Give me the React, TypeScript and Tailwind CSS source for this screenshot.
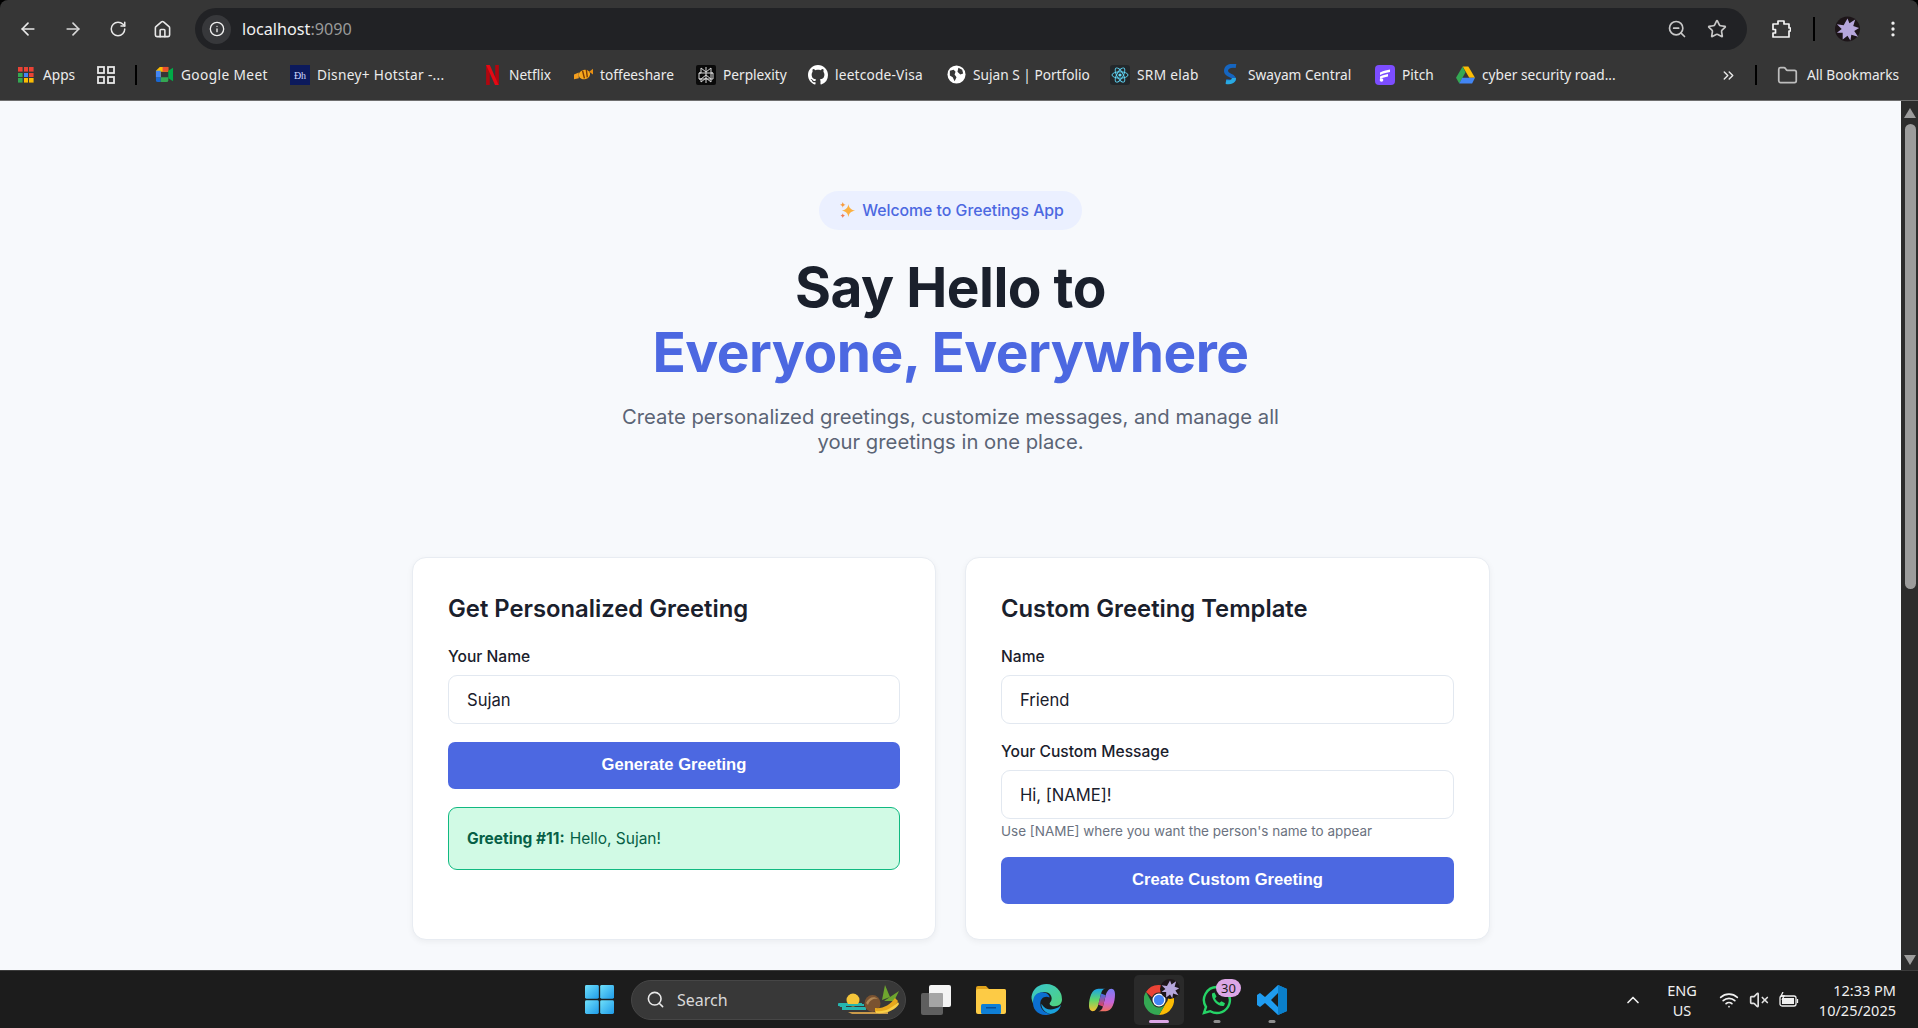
import type { ReactNode } from "react";
import clsx from "clsx";
import {
  ArrowLeft,
  ArrowRight,
  ChevronsRight,
  ChevronUp,
  EllipsisVertical,
  Folder,
  Home,
  Info,
  RotateCw,
  Search,
  Star,
  VolumeX,
  Wifi,
  ZoomOut,
} from "lucide-react";

const UI_FONT = "font-['Noto_Sans','Open_Sans',sans-serif]";

/* ---------- small drawings ---------- */

function AppsDots() {
  const colors = ["#ea4335", "#ea4335", "#ea4335", "#34a853", "#4285f4", "#ea4335", "#34a853", "#fbbc04", "#fbbc04"];
  return (
    <div className="grid grid-cols-3 gap-[1px] w-[16px] h-[16px]">
      {colors.map((c, i) => (
        <svg key={i} viewBox="0 0 4 4" className="w-[4.6px] h-[4.6px]">
          <rect width="4" height="4" fill={c} />
        </svg>
      ))}
    </div>
  );
}

function GridIcon() {
  return (
    <svg viewBox="0 0 18 18" className="w-[18px] h-[18px]" fill="none" stroke="#e8e8e8" strokeWidth="1.8">
      <rect x="1" y="1" width="6" height="6" />
      <rect x="11" y="1" width="6" height="6" />
      <rect x="1" y="11" width="6" height="6" />
      <rect x="11" y="11" width="6" height="6" />
    </svg>
  );
}

function MeetIcon() {
  return (
    <svg viewBox="0 0 20 20" className="w-[19px] h-[19px]">
      <path d="M5 2h9v5H6v6H1V6z" fill="#fbbc04" />
      <path d="M1 6h5v7H1z" fill="#4285f4" />
      <path d="M1 13h5v5H3a2 2 0 0 1-2-2z" fill="#1967d2" />
      <path d="M6 13h8v3a2 2 0 0 1-2 2H6z" fill="#34a853" />
      <path d="M14 2v5H8V2z" fill="#ea4335" opacity="0.9" />
      <path d="M14 6v8l5 3V3z" fill="#00ac47" />
    </svg>
  );
}

function DisneyIcon() {
  return (
    <svg viewBox="0 0 20 20" className="w-[20px] h-[20px]">
      <rect width="20" height="20" fill="#0c1a5c" />
      <text x="10" y="14" textAnchor="middle" fontSize="10" fill="#cfd8ff" fontFamily="Liberation Serif, serif">
        Ðh
      </text>
    </svg>
  );
}

function NetflixIcon() {
  return (
    <svg viewBox="0 0 14 22" className="w-[13px] h-[20px]">
      <path d="M0 0h4v22l-4 .5z" fill="#b1060f" />
      <path d="M10 0h4v22.5l-4-.5z" fill="#b1060f" />
      <path d="M0 0h4l10 22.5h-4z" fill="#e50914" />
    </svg>
  );
}

function ToffeeIcon() {
  return (
    <svg viewBox="0 0 20 20" className="w-[19px] h-[19px]">
      <path d="M0 10l5-2v6l-5 1z" fill="#f29d1f" />
      <ellipse cx="11" cy="10" rx="6" ry="5" transform="rotate(-15 11 10)" fill="#f5a81c" />
      <path d="M9 6l2 8M13 5l1 8" stroke="#7a3b06" strokeWidth="1.5" />
      <path d="M16 7l4-3v6z" fill="#e88f12" />
    </svg>
  );
}

function PerplexityIcon() {
  return (
    <svg viewBox="0 0 20 20" className="w-[20px] h-[20px] rounded-[2px]">
      <rect width="20" height="20" fill="#0a0a0a" />
      <path
        d="M5 3l5 4 5-4v5h2M5 3v5H3v6h2l5-4 5 4v-6M10 2v16M5 14v3l5-4 5 4v-3M3 8h14v6H3"
        fill="none"
        stroke="#d8d8d8"
        strokeWidth="1"
      />
    </svg>
  );
}

function GithubIcon() {
  return (
    <svg viewBox="0 0 16 16" className="w-[20px] h-[20px]" fill="#ffffff">
      <path d="M8 0C3.58 0 0 3.58 0 8c0 3.54 2.29 6.53 5.47 7.59.4.07.55-.17.55-.38 0-.19-.01-.82-.01-1.49-2.01.37-2.53-.49-2.69-.94-.09-.23-.48-.94-.82-1.13-.28-.15-.68-.52-.01-.53.63-.01 1.08.58 1.23.82.72 1.21 1.87.87 2.33.66.07-.52.28-.87.51-1.07-1.78-.2-3.64-.89-3.64-3.95 0-.87.31-1.59.82-2.15-.08-.2-.36-1.02.08-2.12 0 0 .67-.21 2.2.82.64-.18 1.32-.27 2-.27s1.36.09 2 .27c1.53-1.04 2.2-.82 2.2-.82.44 1.1.16 1.92.08 2.12.51.56.82 1.27.82 2.15 0 3.07-1.87 3.75-3.65 3.95.29.25.54.73.54 1.48 0 1.07-.01 1.93-.01 2.2 0 .21.15.46.55.38A8.01 8.01 0 0 0 16 8c0-4.42-3.58-8-8-8z" />
    </svg>
  );
}

function GlobeIcon() {
  return (
    <svg viewBox="0 0 20 20" className="w-[19px] h-[19px]">
      <circle cx="10" cy="10" r="9.5" fill="#ffffff" />
      <path d="M3 6l4-1 2 2-1 3 2 3-2 4-2-4-3-2zM12 3l4 2 1 4-3 1-3-3z" fill="#383838" />
    </svg>
  );
}

function ReactIcon() {
  return (
    <svg viewBox="0 0 20 20" className="w-[20px] h-[20px] rounded-[3px]">
      <rect width="20" height="20" fill="#23272a" />
      <g fill="none" stroke="#61dafb" strokeWidth="0.9">
        <ellipse cx="10" cy="10" rx="8" ry="3.2" />
        <ellipse cx="10" cy="10" rx="8" ry="3.2" transform="rotate(60 10 10)" />
        <ellipse cx="10" cy="10" rx="8" ry="3.2" transform="rotate(120 10 10)" />
      </g>
      <circle cx="10" cy="10" r="1.6" fill="#61dafb" />
    </svg>
  );
}

function SwayamIcon() {
  return (
    <svg viewBox="0 0 14 22" className="w-[14px] h-[22px]">
      <path d="M12 2C6 1 2 3 2 7c0 5 8 4 8 8 0 2-3 3-8 2" fill="none" stroke="#1565c0" strokeWidth="4" />
      <path d="M10 14c0 3-3 5-8 4" fill="none" stroke="#29a9e1" strokeWidth="4" />
    </svg>
  );
}

function PitchIcon() {
  return (
    <svg viewBox="0 0 20 20" className="w-[20px] h-[20px]">
      <rect width="20" height="20" rx="4" fill="#7c4dff" />
      <path d="M5 7.5c4-2 7-2.500 10-3v2.500c-3 .5-6 1-10 3zM5 11.500c3-1.500 5-2 8-2.500v2.500c-3 .5-5 1-8 2.500z" fill="#ffffff" />
      <circle cx="6.500" cy="15" r="1.800" fill="#ffffff" />
    </svg>
  );
}

function DriveIcon() {
  return (
    <svg viewBox="0 0 20 18" className="w-[19px] h-[18px]">
      <path d="M7 0h6l7 12h-6z" fill="#fbbc04" />
      <path d="M7 0l3 6-6.500 12L0 12z" fill="#34a853" />
      <path d="M6.500 12H20l-3 6H3.500z" fill="#4285f4" />
    </svg>
  );
}

function Avatar({ className }: { className: string }) {
  return (
    <svg viewBox="0 0 26 26" className={className}>
      <circle cx="13" cy="13" r="13" fill="#1d1519" />
      <path
        d="M13 2l2 5 6-4-2 7 6 2-5 3 4 6-7-2-1 6-3-5-5 4 0-7-6 0 5-4-5-5 7 1z"
        fill="#b6a6dc"
      />
    </svg>
  );
}

function Sparkles() {
  return (
    <svg viewBox="0 0 18 18" className="w-[17px] h-[17px] shrink-0">
      <path d="M10 2c.7 4.200 2.200 5.800 7 7-4.800 1.200-6.300 2.800-7 7-.7-4.200-2.200-5.800-7-7 4.800-1.200 6.300-2.800 7-7z" fill="#fbb040" />
      <path d="M4 0c.4 1.800 1.100 2.500 3 3-1.900.5-2.600 1.200-3 3-.4-1.800-1.100-2.500-3-3 1.900-.5 2.600-1.200 3-3z" fill="#f79a3e" />
      <path d="M4 12c.3 1.500.9 2.100 2.400 2.500-1.500.4-2.100 1-2.400 2.500-.3-1.500-.9-2.100-2.400-2.500 1.500-.4 2.100-1 2.400-2.500z" fill="#ef7c55" />
    </svg>
  );
}

function WindowsLogo() {
  return (
    <svg viewBox="0 0 30 30" className="w-[29px] h-[29px]">
      <defs>
        <linearGradient id="winA" x1="0" y1="0" x2="1" y2="1">
          <stop offset="0" stopColor="#6fe0fb" />
          <stop offset="1" stopColor="#1f9be8" />
        </linearGradient>
      </defs>
      <rect x="0" y="0" width="14.300" height="14.300" rx="1.500" fill="url(#winA)" />
      <rect x="15.700" y="0" width="14.300" height="14.300" rx="1.500" fill="url(#winA)" />
      <rect x="0" y="15.700" width="14.300" height="14.300" rx="1.500" fill="url(#winA)" />
      <rect x="15.700" y="15.700" width="14.300" height="14.300" rx="1.500" fill="url(#winA)" />
    </svg>
  );
}

function SearchDecor() {
  return (
    <svg viewBox="0 0 62 32" className="w-[62px] h-[32px]">
      <path d="M0 19h24v2H8v2h20v3H4v-3H2z" fill="#25b5b0" />
      <path d="M10 28h40v2H14z" fill="#c99a4a" />
      <circle cx="15" cy="16" r="6.500" fill="#f4c53a" />
      <path d="M0 20h26v2H0z" fill="#25b5b0" />
      <path d="M44 16L47 1l5 12zM46 17l15-10-5 10z" fill="#6ea52e" />
      <ellipse cx="34.500" cy="19.500" rx="8" ry="8.500" fill="#7a5230" />
      <path d="M28 19c3-6 8-7 12-4-3-1-8 0-10 6z" fill="#b08654" />
      <path d="M37 24c8 1 15-3 20-10l3 3c-4 8-12 12-23 11z" fill="#e8a81c" />
      <path d="M38 27c8 1 15-2 22-9l1 2c-4 6-12 10-23 9z" fill="#f9cf45" />
    </svg>
  );
}

function TaskView() {
  return (
    <svg viewBox="0 0 30 30" className="w-[30px] h-[30px]">
      <rect x="0" y="8" width="22" height="22" rx="2" fill="#5f5f5f" />
      <rect x="8" y="0" width="22" height="22" rx="2" fill="#f4f4f4" />
      <rect x="8" y="8" width="14" height="14" rx="1" fill="#a5a5a5" />
    </svg>
  );
}

function ExplorerIcon() {
  return (
    <svg viewBox="0 0 30 30" className="w-[30px] h-[30px]">
      <path d="M0 3a2 2 0 0 1 2-2h8l3 3h15a2 2 0 0 1 2 2v4H0z" fill="#e0a21b" />
      <rect x="0" y="4" width="30" height="25" rx="2" fill="#fdcb45" />
      <rect x="5" y="19" width="20" height="10" rx="1.500" fill="#0f7fd6" />
      <rect x="10" y="22" width="10" height="1.500" fill="#0a4e94" />
    </svg>
  );
}

function EdgeIcon() {
  return (
    <svg viewBox="0 0 30 30" className="w-[31px] h-[31px]">
      <defs>
        <linearGradient id="edgeA" x1="0" y1="0" x2="1" y2="1">
          <stop offset="0" stopColor="#37c6d0" />
          <stop offset="1" stopColor="#52d37a" />
        </linearGradient>
      </defs>
      <path d="M15 0a15 15 0 0 1 15 15c0 4-3 6.500-7 6.500-3 0-5-1-5-2.500 0-1 2-2 2-5C20 10 16 7 11 8 6 9 3 13 2 19 .500 15 0 13 1 10 3 4 8 0 15 0z" fill="url(#edgeA)" />
      <path d="M2 16C3 10 7 8 11 8c4 0 7 3 7 5-5-2-9 1-9 6 0 5 4 9 10 10-2 .700-3 1-5 1C6 30 1 24 2 16z" fill="#0c6fd0" />
      <path d="M19 29c-5-1-9-5-9-10 3 5 8 7 13 5 3-1 5-2 6-4-1 5-5 8-10 9z" fill="#1aa1dc" />
    </svg>
  );
}

function CopilotIcon() {
  return (
    <svg viewBox="0 0 28 28" className="w-[28px] h-[26px]">
      <defs>
        <linearGradient id="copA" x1="0" y1="0" x2="0" y2="1">
          <stop offset="0" stopColor="#1ba4e8" />
          <stop offset="0.5" stopColor="#5fd66a" />
          <stop offset="1" stopColor="#f7c02f" />
        </linearGradient>
        <linearGradient id="copB" x1="0" y1="0" x2="0" y2="1">
          <stop offset="0" stopColor="#7b7cf5" />
          <stop offset="0.6" stopColor="#c664d8" />
          <stop offset="1" stopColor="#f06f5e" />
        </linearGradient>
        <linearGradient id="copC" x1="0" y1="0" x2="0" y2="1">
          <stop offset="0" stopColor="#3f6fe8" />
          <stop offset="1" stopColor="#e8405f" />
        </linearGradient>
      </defs>
      <path d="M10 2h8c-3 0-4 2-5 5l-3 12c-.8 3-3 7-6 7-3 0-4-3-4-6C0 12 3 2 10 2z" fill="url(#copA)" />
      <path d="M18 26h-8c3 0 4-2 5-5l3-12c.8-3 3-7 6-7 3 0 4 3 4 6 0 8-3 18-10 18z" fill="url(#copB)" />
      <path d="M13 7l5 2-3 12-5-2z" fill="url(#copC)" />
    </svg>
  );
}

function ChromeIcon() {
  return (
    <svg viewBox="0 0 30 30" className="w-[30px] h-[30px]">
      <path d="M15 0a15 15 0 0 1 13 7.500H15a7.500 7.500 0 0 0-7 4.700L2 7A15 15 0 0 1 15 0z" fill="#ea4335" />
      <path d="M28 7.500A15 15 0 0 1 15 30l6.500-11.200a7.500 7.500 0 0 0 0-11.300z" fill="#fbbc04" />
      <path d="M2 7l6.500 11.500a7.500 7.500 0 0 0 13 .3L15 30A15 15 0 0 1 2 7z" fill="#34a853" />
      <circle cx="15" cy="15" r="6.500" fill="#ffffff" />
      <circle cx="15" cy="15" r="5.200" fill="#4285f4" />
    </svg>
  );
}

function WhatsAppIcon() {
  return (
    <svg viewBox="0 0 30 30" className="w-[30px] h-[30px]">
      <path
        d="M15 2a13 13 0 0 0-11 20l-2 6 6.300-1.800A13 13 0 1 0 15 2z"
        fill="none"
        stroke="#25d366"
        strokeWidth="2.400"
      />
      <path d="M10 8.500l2.500-1 2 4-1.500 2c1 2 2.500 3.300 4.500 4.300l2-1.500 3.500 2-1 2.500c-5 1.500-13-5-12-12.800z" fill="#25d366" />
    </svg>
  );
}

function VsCodeIcon() {
  return (
    <svg viewBox="0 0 30 30" className="w-[30px] h-[30px]">
      <path d="M21 0l9 4v22l-9 4-13-12-5 4-3-2V10l3-2 5 4zM21 8l-7 7 7 7z" fill="#1f9cf0" fillRule="evenodd" />
      <path d="M21 0l9 4v22l-9 4z" fill="#0a7fcb" />
    </svg>
  );
}

/* ---------- browser chrome ---------- */

function Bookmark({
  icon,
  label,
  className,
  labelClass,
}: {
  icon: ReactNode;
  label: string;
  className: string;
  labelClass?: string;
}) {
  return (
    <div className={clsx("flex items-center shrink-0", className)}>
      <span className="w-[20px] flex justify-center shrink-0">{icon}</span>
      <span className={clsx("ml-[7px] text-[13.700px] text-[#ececec] whitespace-nowrap", labelClass)}>{label}</span>
    </div>
  );
}

function BrowserChrome() {
  return (
    <header className={clsx("shrink-0 bg-black", UI_FONT)}>
      <div className="rounded-t-[8px] bg-[#363636]">
        {/* toolbar */}
        <div className="h-[50px] flex items-end">
          <div className="h-[42px] flex items-center w-[195px] text-[#e8e8e8] pb-[0px]">
            <ArrowLeft className="w-[20px] h-[20px] ml-[18px] shrink-0" />
            <ArrowRight className="w-[20px] h-[20px] ml-[25px] shrink-0 text-[#d8d8d8]" />
            <RotateCw className="w-[18px] h-[18px] ml-[26px] shrink-0" />
            <Home className="w-[19px] h-[19px] ml-[26px] shrink-0" />
          </div>
          <div className="w-[1552px] h-[42px] rounded-full bg-[#212225] flex items-center pl-[7px] pr-[20px]">
            <span className="w-[29px] h-[29px] rounded-full bg-[#37383b] flex items-center justify-center shrink-0">
              <Info className="w-[16px] h-[16px] text-[#f0f0f0]" />
            </span>
            <span className="ml-[11px] text-[16.200px] text-[#f1f1f1]">
              localhost<span className="text-[#9a9a9a]">:9090</span>
            </span>
            <ZoomOut className="w-[20px] h-[20px] ml-auto text-[#c8c8c8]" />
            <Star className="w-[20px] h-[20px] ml-[20px] text-[#c8c8c8]" />
          </div>
          <div className="h-[42px] flex items-center flex-1 text-[#f0f0f0]">
            <svg viewBox="0 0 20 20" className="w-[20px] h-[20px] ml-[24px] shrink-0" fill="none" stroke="#f4f4f4" strokeWidth="1.700" strokeLinejoin="round">
              <path d="M2 5h5V2h6v3h5v4h1.500v3H18v6H2v-4h2.500v-3.500H2z" />
            </svg>
            <span className="w-[2px] h-[24px] bg-black ml-[22px] shrink-0" />
            <Avatar className="w-[25px] h-[26px] ml-[20px] shrink-0" />
            <EllipsisVertical className="w-[20px] h-[20px] ml-[23px] shrink-0" />
          </div>
        </div>

        {/* bookmarks bar */}
        <div className="h-[51px] flex items-center pl-[16px] border-b border-[#6f6f6f]">
          <Bookmark icon={<AppsDots />} label="Apps" className="w-[80px]" />
          <div className="w-[39px] shrink-0 pl-[1px]">
            <GridIcon />
          </div>
          <span className="w-[2px] h-[20px] bg-black shrink-0" />
          <span className="w-[17px] shrink-0" />
          <Bookmark icon={<MeetIcon />} label="Google Meet" className="w-[136px]" labelClass="tracking-[0.4px]" />
          <Bookmark icon={<DisneyIcon />} label="Disney+ Hotstar -..." className="w-[192px]" labelClass="tracking-[0.3px]" />
          <Bookmark icon={<NetflixIcon />} label="Netflix" className="w-[91px]" />
          <Bookmark icon={<ToffeeIcon />} label="toffeeshare" className="w-[123px]" />
          <Bookmark icon={<PerplexityIcon />} label="Perplexity" className="w-[112px]" />
          <Bookmark icon={<GithubIcon />} label="leetcode-Visa" className="w-[138px]" labelClass="tracking-[0.2px]" />
          <Bookmark icon={<GlobeIcon />} label="Sujan S | Portfolio" className="w-[164px]" />
          <Bookmark icon={<ReactIcon />} label="SRM elab" className="w-[111px]" labelClass="tracking-[0.3px]" />
          <Bookmark icon={<SwayamIcon />} label="Swayam Central" className="w-[154px]" />
          <Bookmark icon={<PitchIcon />} label="Pitch" className="w-[80px]" />
          <Bookmark icon={<DriveIcon />} label="cyber security road..." className="w-[265px]" />
          <ChevronsRight className="w-[17px] h-[17px] text-[#e8e8e8] shrink-0" />
          <span className="w-[2px] h-[20px] bg-black ml-[18px] shrink-0" />
          <Folder className="w-[21px] h-[21px] ml-[20px] text-[#bdbdbd] shrink-0" />
          <span className="ml-[9px] text-[13.700px] text-[#ececec] whitespace-nowrap">All Bookmarks</span>
        </div>
      </div>
    </header>
  );
}

function Scrollbar() {
  return (
    <div className="w-[17px] shrink-0 bg-[#2c2c2c] flex flex-col items-center pl-[1px]">
      <svg viewBox="0 0 12 10" className="w-[12px] h-[10px] mt-[7px] shrink-0">
        <path d="M6 0l6 10H0z" fill="#9c9c9c" />
      </svg>
      <div className="w-[11px] h-[465px] mt-[6px] rounded-full bg-[#9c9c9c] shrink-0" />
      <svg viewBox="0 0 12 10" className="w-[12px] h-[10px] mt-auto mb-[5px] shrink-0">
        <path d="M6 10L12 0H0z" fill="#9c9c9c" />
      </svg>
    </div>
  );
}

/* ---------- page ---------- */

function Field({ label, value, className }: { label: string; value: string; className?: string }) {
  return (
    <div className={className}>
      <label className="block text-[15.600px] leading-[21px] font-medium text-[#1a202c] mb-[8px]">{label}</label>
      <input
        readOnly
        value={value}
        className="block w-full h-[49px] px-[18px] rounded-[9px] border border-[#e2e8f0] bg-white text-[16.600px] text-[#1a202c] outline-none font-['Inter',sans-serif]"
      />
    </div>
  );
}

function PrimaryButton({ children, className }: { children: ReactNode; className?: string }) {
  return (
    <button
      className={clsx(
        "block w-full h-[47px] rounded-[7px] bg-[#4c68e1] text-white text-[16.600px] font-bold font-['Liberation_Sans',Arial,sans-serif]",
        className,
      )}
    >
      {children}
    </button>
  );
}

function Card({ title, children }: { title: string; children: ReactNode }) {
  return (
    <section className="rounded-[14px] border border-[#e8ecf2] bg-white p-[35px] shadow-[0_2px_6px_rgba(0,0,0,0.05)]">
      <h2 className="text-[23.800px] leading-[32px] font-semibold text-[#1a202c] mb-[21px]">{title}</h2>
      {children}
    </section>
  );
}

function Page() {
  return (
    <main className="flex-1 min-w-0 bg-[#f7f9fc] font-['Inter',sans-serif] pt-[90px] overflow-hidden">
      <div className="flex flex-col items-center text-center">
        <div className="h-[39px] pl-[20px] pr-[18px] rounded-full bg-[#ebf0ff] flex items-center gap-[6px] text-[15.800px] font-medium text-[#4c68e1]">
          <Sparkles />
          Welcome to Greetings App
        </div>
        <h1 className="mt-[25px] text-[55px] leading-[65px] font-bold tracking-[-0.5px] text-[#1a202c]">
          Say Hello to
          <br />
          <span className="text-[#4c68e1]">Everyone, Everywhere</span>
        </h1>
        <p className="mt-[19px] w-[680px] text-[20.250px] leading-[25px] text-[#5b6475]">
          Create personalized greetings, customize messages, and manage all your greetings in one place.
        </p>
      </div>

      <div className="w-[1078px] ml-[412px] mt-[103px] grid grid-cols-[524px_525px] gap-[29px]">
        <Card title="Get Personalized Greeting">
          <Field label="Your Name" value="Sujan" />
          <PrimaryButton className="mt-[18px]">Generate Greeting</PrimaryButton>
          <div className="mt-[18px] h-[63px] px-[18px] rounded-[9px] border border-[#10b981] bg-[#d1fae5] flex items-center text-[15.500px] text-[#065f46]">
            <strong className="font-bold mr-[5px]">Greeting #11:</strong> Hello, Sujan!
          </div>
        </Card>
        <Card title="Custom Greeting Template">
          <Field label="Name" value="Friend" />
          <Field label="Your Custom Message" value="Hi, [NAME]!" className="mt-[17px]" />
          <p className="mt-[4px] text-[13.500px] leading-[17px] text-[#6b7280]">
            Use [NAME] where you want the person's name to appear
          </p>
          <PrimaryButton className="mt-[17px]">Create Custom Greeting</PrimaryButton>
        </Card>
      </div>
    </main>
  );
}

/* ---------- taskbar ---------- */

function Dot({ wide }: { wide?: boolean }) {
  return (
    <span
      className={clsx(
        "absolute bottom-[2px] left-1/2 -translate-x-1/2 h-[3px] rounded-full",
        wide ? "w-[20px] bg-[#dca6e6]" : "w-[7px] bg-[#8e8e8e]",
      )}
    />
  );
}

function Taskbar() {
  return (
    <footer className={clsx("h-[58px] shrink-0 bg-[#1c1c1c] border-t border-[#3c3c3c] flex items-center text-white", UI_FONT)}>
      <div className="ml-[585px] shrink-0">
        <WindowsLogo />
      </div>
      <div className="ml-[17px] w-[275px] h-[40px] rounded-full bg-[#383838] border border-[#464646] flex items-center pl-[14px] pr-[5px] shrink-0">
        <Search className="w-[19px] h-[19px] text-[#e8e8e8]" />
        <span className="ml-[12px] text-[16px] text-[#d8d8d8]">Search</span>
        <span className="ml-auto">
          <SearchDecor />
        </span>
      </div>
      <div className="ml-[15px] shrink-0">
        <TaskView />
      </div>
      <div className="ml-[25px] shrink-0">
        <ExplorerIcon />
      </div>
      <div className="ml-[25px] shrink-0">
        <EdgeIcon />
      </div>
      <div className="ml-[26px] shrink-0">
        <CopilotIcon />
      </div>
      <div className="ml-[18px] relative w-[50px] h-[50px] rounded-[5px] bg-[#2a2a2a] flex items-center justify-center shrink-0">
        <ChromeIcon />
        <Avatar className="absolute top-[4px] right-[4px] w-[20px] h-[20px]" />
        <Dot wide />
      </div>
      <div className="ml-[8px] relative w-[50px] h-[50px] flex items-center justify-center shrink-0">
        <WhatsAppIcon />
        <span className="absolute top-[4px] right-[1px] w-[25px] h-[18px] rounded-full bg-[#dca6e6] text-[#1c1c1c] text-[13px] leading-[18px] text-center">
          30
        </span>
        <Dot />
      </div>
      <div className="ml-[5px] relative w-[50px] h-[50px] flex items-center justify-center shrink-0">
        <VsCodeIcon />
        <Dot />
      </div>

      <ChevronUp className="w-[20px] h-[20px] ml-[326px] text-[#f0f0f0] shrink-0" />
      <div className="ml-[20px] w-[38px] text-center text-[14.500px] leading-[20px] text-[#f0f0f0] shrink-0">
        <div>ENG</div>
        <div>US</div>
      </div>
      <Wifi className="w-[20px] h-[20px] ml-[18px] text-[#f0f0f0] shrink-0" />
      <VolumeX className="w-[20px] h-[20px] ml-[10px] text-[#e0e0e0] shrink-0" />
      <svg viewBox="0 0 20 16" className="w-[20px] h-[16px] ml-[10px] shrink-0" fill="none" stroke="#f0f0f0" strokeWidth="1.300">
        <rect x="1" y="4" width="16" height="10" rx="2" />
        <rect x="3" y="6" width="12" height="6" fill="#f0f0f0" stroke="none" />
        <path d="M18.500 7v4" />
        <path d="M4 0L2 4h3l-2 4" />
      </svg>
      <div className="ml-auto mr-[22px] text-right text-[14.500px] leading-[20px] text-[#f0f0f0] shrink-0">
        <div>12:33 PM</div>
        <div>10/25/2025</div>
      </div>
    </footer>
  );
}

export default function App() {
  return (
    <div className="w-[1918px] h-[1028px] flex flex-col overflow-hidden bg-black">
      <BrowserChrome />
      <div className="flex-1 min-h-0 flex">
        <Page />
        <Scrollbar />
      </div>
      <Taskbar />
    </div>
  );
}
